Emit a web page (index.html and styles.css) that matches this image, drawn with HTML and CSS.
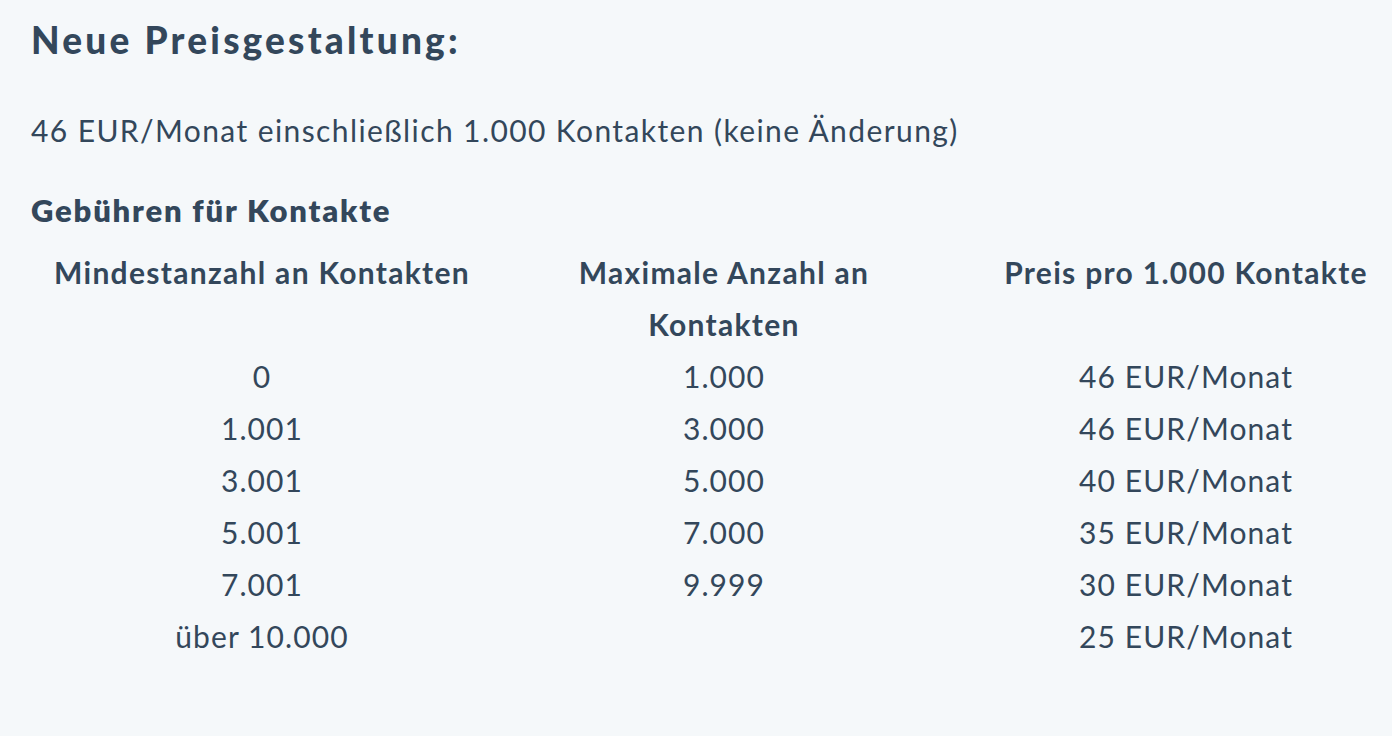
FILE: index.html
```html
<!DOCTYPE html>
<html lang="de">
<head>
<meta charset="utf-8">
<title>Neue Preisgestaltung</title>
<link rel="stylesheet" href="styles.css">
</head>
<body>
<main class="page">
  <h1 class="title">Neue Preisgestaltung:</h1>
  <p class="intro">46 EUR/Monat einschließlich 1.000 Kontakten (keine Änderung)</p>
  <h2 class="subtitle">Gebühren für Kontakte</h2>
  <div class="table-wrap">
    <table class="fees">
      <thead>
        <tr>
          <th>Mindestanzahl an Kontakten</th>
          <th>Maximale Anzahl an Kontakten</th>
          <th>Preis pro 1.000 Kontakte</th>
        </tr>
      </thead>
      <tbody>
        <tr><td>0</td><td>1.000</td><td>46 EUR/Monat</td></tr>
        <tr><td>1.001</td><td>3.000</td><td>46 EUR/Monat</td></tr>
        <tr><td>3.001</td><td>5.000</td><td>40 EUR/Monat</td></tr>
        <tr><td>5.001</td><td>7.000</td><td>35 EUR/Monat</td></tr>
        <tr><td>7.001</td><td>9.999</td><td>30 EUR/Monat</td></tr>
        <tr><td>über 10.000</td><td></td><td>25 EUR/Monat</td></tr>
      </tbody>
    </table>
  </div>
</main>
</body>
</html>
```

FILE: styles.css
```css
html, body {
  margin: 0;
  padding: 0;
  background: #f5f8fa;
  overflow: hidden;
}

body {
  font-family: Lato, "Open Sans", sans-serif;
  color: #33475b;
}

.page {
  padding: 14px 0 0 31px;
}

.title {
  margin: 0;
  font-size: 37px;
  line-height: 52px;
  font-weight: 900;
  letter-spacing: 3.2px;
}

.intro {
  margin: 38px 0 0;
  font-size: 30px;
  line-height: 52px;
  font-weight: 400;
  letter-spacing: 1.4px;
}

.subtitle {
  margin: 28px 0 0;
  font-size: 31px;
  line-height: 52px;
  font-weight: 800;
  letter-spacing: 1.8px;
}

.table-wrap {
  margin-top: 10px;
  width: 1386px;
}

.fees {
  border-collapse: collapse;
  table-layout: fixed;
  width: 1386px;
}

.fees th,
.fees td {
  padding: 0 10px;
  text-align: center;
  vertical-align: top;
  font-size: 30px;
  line-height: 52px;
}

.fees th {
  font-weight: 700;
  letter-spacing: 1.3px;
}

.fees td {
  font-weight: 400;
  letter-spacing: 1.1px;
}
```
